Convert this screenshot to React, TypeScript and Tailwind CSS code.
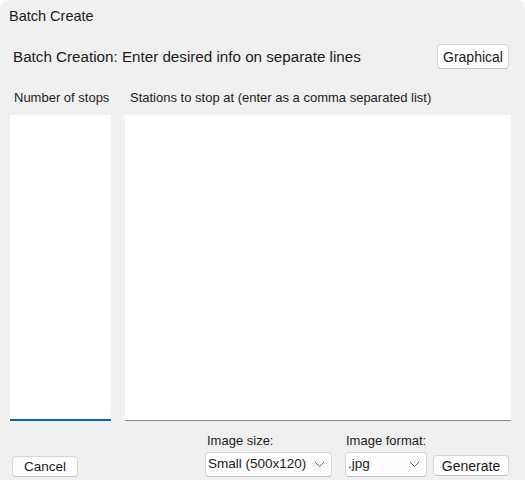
import React from "react";

function Chevron() {
  return (
    <svg width="11" height="7" viewBox="0 0 11 7" className="shrink-0">
      <polyline points="1,1 5.5,5.5 10,1" fill="none" stroke="#5c5c5c" strokeWidth="1" />
    </svg>
  );
}

function WinButton({ label, className }: { label: string; className: string }) {
  return (
    <div
      className={`flex items-center justify-center rounded-[4px] border border-[#d6d6d6] border-b-[#c0c0c0] bg-[#fdfdfd] text-[#1b1b1b] ${className}`}
    >
      {label}
    </div>
  );
}

function Dropdown({ value, className }: { value: string; className: string }) {
  return (
    <div
      className={`flex h-[25px] items-center justify-between rounded-[4px] border border-[#d6d6d6] border-b-[#bcbcbc] bg-[#fdfdfd] pl-[2px] pr-[6px] text-[13.5px] text-[#1b1b1b] ${className}`}
    >
      <span>{value}</span>
      <Chevron />
    </div>
  );
}

export default function App() {
  return (
    <div
      className="flex h-[480px] w-[525px] flex-col overflow-hidden rounded-t-[8px] bg-[#f0f0f0] text-[#1b1b1b]"
      style={{ fontFamily: '"Liberation Sans", Arial, sans-serif' }}
    >
      {/* Title bar */}
      <div className="flex h-[33px] items-center bg-[#f1f1f1] pl-[9px] text-[14.5px]">Batch Create</div>

      {/* Header */}
      <div className="mt-[11px] flex h-[25px] items-center justify-between pl-[13px] pr-[16px]">
        <span className="pt-[1px] text-[15.2px]">Batch Creation: Enter desired info on separate lines</span>
        <WinButton label="Graphical" className="h-[25px] w-[72px] pt-[1px] text-[14px]" />
      </div>

      {/* Column labels */}
      <div className="mt-[21px] flex h-[16px] items-center text-[13px]">
        <span className="ml-[14px] w-[116px]">Number of stops</span>
        <span>Stations to stop at (enter as a comma separated list)</span>
      </div>

      {/* Text areas */}
      <div className="mt-[9px] flex h-[306px] gap-[14px] pl-[10px]">
        <div className="w-[101px] border-b-2 border-[#0067c0] bg-white" />
        <div className="w-[386px] border-b border-[#8a8a8a] bg-white" />
      </div>

      {/* Bottom controls */}
      <div className="flex flex-1 items-end pb-[3px] text-[13px]">
        <WinButton label="Cancel" className="ml-[12px] h-[21px] w-[66px] pt-[1px] text-[13.5px]" />
        <div className="ml-[127px] flex flex-col">
          <span className="mb-[2px] ml-[2px]">Image size:</span>
          <Dropdown value="Small (500x120)" className="w-[127px]" />
        </div>
        <div className="ml-[13px] flex flex-col">
          <span className="mb-[2px] ml-[1px]">Image format:</span>
          <Dropdown value=".jpg" className="w-[82px]" />
        </div>
        <WinButton label="Generate" className="mb-[1px] ml-[6px] h-[21px] w-[76px] pt-[1px] text-[14px]" />
      </div>
    </div>
  );
}
